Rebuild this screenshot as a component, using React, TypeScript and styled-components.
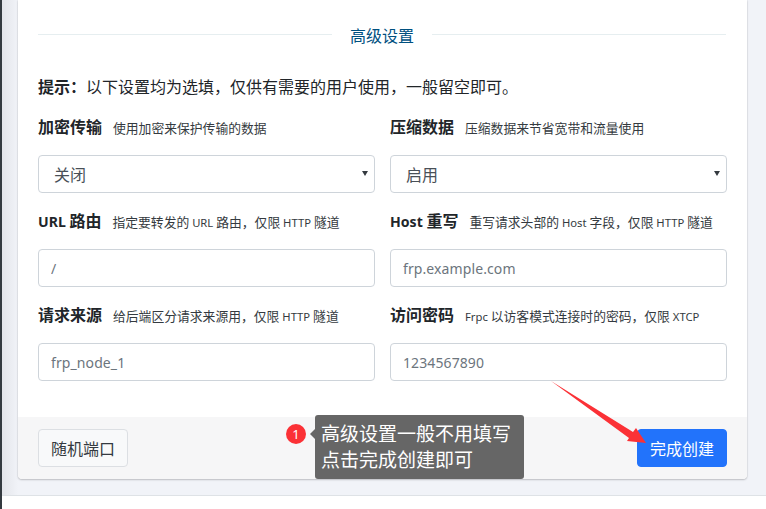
import React from "react";
import styled, { createGlobalStyle } from "styled-components";

const GlobalStyle = createGlobalStyle`
  html, body {
    margin: 0;
    padding: 0;
    height: 509px;
    overflow: hidden;
    background: #fff;
    font-family: "Noto Sans", "Noto Sans CJK SC", sans-serif;
  }
  * { box-sizing: border-box; }
`;

const Page = styled.div`
  position: relative;
  width: 766px;
  height: 509px;
  display: flex;
  background: #fff;
`;

const Rail = styled.div`
  width: 2px;
  background: #343a40;
`;

const Main = styled.div`
  flex: 1;
  display: flex;
  flex-direction: column;
`;

const Content = styled.div`
  height: 495px;
  padding: 0 19px 16px 16px;
  background: linear-gradient(90deg, #e3e5ea 0, #f1f3f8 16px);
`;

const Footer = styled.div`
  flex: 1;
  background: #fff;
  border-top: 1px solid #dee2e6;
`;

const Card = styled.div`
  height: 479px;
  display: flex;
  flex-direction: column;
  background: #fff;
  border-radius: 0 0 4px 4px;
  box-shadow: 0 0 1px rgba(0, 0, 0, 0.3), 0 1px 2px rgba(0, 0, 0, 0.2);
`;

const CardBody = styled.div`
  flex: 1;
  padding: 24px 20px 0;
`;

const Divider = styled.div`
  display: flex;
  align-items: center;
  gap: 18px;
  height: 24px;
  padding-right: 1px;
  color: #00507f;
  font-size: 16px;
  line-height: 24px;

  &::before,
  &::after {
    content: "";
    flex: 1;
    height: 1px;
    margin-top: -4px;
    background: #e6eef0;
  }
`;

const Hint = styled.p`
  margin: 27px 0 0;
  font-size: 16px;
  line-height: 24px;
  color: #212529;

  b {
    font-weight: 700;
  }
`;

const FormGrid = styled.div`
  display: grid;
  grid-template-columns: 337px 337px;
  column-gap: 15px;
  row-gap: 16px;
  margin-top: 16px;
`;

const Field = styled.div`
  display: flex;
  flex-direction: column;
`;

const LabelRow = styled.div`
  display: flex;
  align-items: baseline;
  gap: 11px;
  height: 24px;
  line-height: 24px;
  white-space: nowrap;
`;

const FieldLabel = styled.span`
  font-size: 16px;
  font-weight: 700;
  color: #212529;
`;

const FieldHelp = styled.small`
  font-size: 12.8px;
  color: #343a40;
`;

const Latin = styled.span`
  font-size: 0.88em;
`;

const controlStyles = `
  width: 100%;
  height: 38px;
  margin-top: 16px;
  padding: 0 12px;
  font-family: inherit;
  background: #fff;
  border: 1px solid #ced4da;
  border-radius: 4px;
  outline: none;
`;

const SelectBox = styled.div`
  ${controlStyles}
  position: relative;
  display: flex;
  align-items: center;
  padding-left: 15px;
  font-size: 16px;
  color: #495057;

  &::after {
    content: "";
    position: absolute;
    right: 6px;
    top: 15px;
    border-left: 3px solid transparent;
    border-right: 3px solid transparent;
    border-top: 5px solid #343a40;
  }
`;

const TextInput = styled.input`
  ${controlStyles}
  font-size: 14px;
  letter-spacing: 0.1px;
  color: #495057;

  &::placeholder {
    color: #6c757d;
    opacity: 1;
  }
`;

const CardFooter = styled.div`
  height: 62px;
  display: flex;
  align-items: center;
  justify-content: space-between;
  padding: 0 20px;
  background: #f6f6f7;
  border-radius: 0 0 4px 4px;
`;

const Button = styled.button<{ $primary?: boolean }>`
  width: 90px;
  height: 38px;
  padding: 0;
  font-family: inherit;
  font-size: 16px;
  color: ${(props) => (props.$primary ? "#fff" : "#343a40")};
  background: ${(props) => (props.$primary ? "#2273fb" : "#f8f9fa")};
  border: 1px solid ${(props) => (props.$primary ? "#2273fb" : "#dcdfe3")};
  border-radius: 4px;
`;

const Note = styled.div`
  position: absolute;
  left: 315px;
  top: 415px;
  width: 209px;
  height: 64px;
  padding: 6px 0 0 6px;
  background: #666;
  border-radius: 3px;
  color: #fff;
  font-size: 19px;
  line-height: 26px;

  &::before {
    content: "";
    position: absolute;
    left: -5px;
    top: 14px;
    border-top: 5px solid transparent;
    border-bottom: 5px solid transparent;
    border-right: 5px solid #666;
  }
`;

const Badge = styled.div`
  position: absolute;
  left: 286px;
  top: 424px;
  width: 20px;
  height: 20px;
  display: flex;
  align-items: center;
  justify-content: center;
  border-radius: 50%;
  background: #fb3136;
  color: #fff;
  font-size: 13px;
  line-height: 20px;
`;

const ArrowSvg = styled.svg`
  position: absolute;
  left: 545px;
  top: 375px;
`;

const fields = [
  { label: "加密传输", help: "使用加密来保护传输的数据", value: "关闭" },
  { label: "压缩数据", help: "压缩数据来节省宽带和流量使用", value: "启用" },
  { label: "URL 路由", help: "指定要转发的 URL 路由，仅限 HTTP 隧道", placeholder: "/" },
  { label: "Host 重写", help: "重写请求头部的 Host 字段，仅限 HTTP 隧道", placeholder: "frp.example.com" },
  { label: "请求来源", help: "给后端区分请求来源用，仅限 HTTP 隧道", placeholder: "frp_node_1" },
  { label: "访问密码", help: "Frpc 以访客模式连接时的密码，仅限 XTCP", placeholder: "1234567890" },
];

// the original latin face runs narrower than Noto Sans next to the CJK text
const withLatin = (text: string) =>
  text.split(/([A-Za-z ]+)/).map((part, index) =>
    /[A-Za-z]/.test(part) ? <Latin key={index}>{part}</Latin> : part
  );

export default function App() {
  return (
    <Page>
      <GlobalStyle />
      <Rail />
      <Main>
        <Content>
          <Card>
            <CardBody>
              <Divider>高级设置</Divider>
              <Hint>
                <b>提示：</b>以下设置均为选填，仅供有需要的用户使用，一般留空即可。
              </Hint>
              <FormGrid>
                {fields.map((field) => (
                  <Field key={field.label}>
                    <LabelRow>
                      <FieldLabel>{withLatin(field.label)}</FieldLabel>
                      <FieldHelp>{withLatin(field.help)}</FieldHelp>
                    </LabelRow>
                    {field.value ? (
                      <SelectBox>{field.value}</SelectBox>
                    ) : (
                      <TextInput placeholder={field.placeholder} readOnly />
                    )}
                  </Field>
                ))}
              </FormGrid>
            </CardBody>
            <CardFooter>
              <Button>随机端口</Button>
              <Button $primary>完成创建</Button>
            </CardFooter>
          </Card>
        </Content>
        <Footer />
      </Main>
      <Badge>1</Badge>
      <Note>
        高级设置一般不用填写
        <br />
        点击完成创建即可
      </Note>
      <ArrowSvg width="110" height="75" viewBox="0 0 110 75">
        <polygon points="6,6 88,57 91,53 101,68 82,66 84,63" fill="#fb3136" />
      </ArrowSvg>
    </Page>
  );
}
